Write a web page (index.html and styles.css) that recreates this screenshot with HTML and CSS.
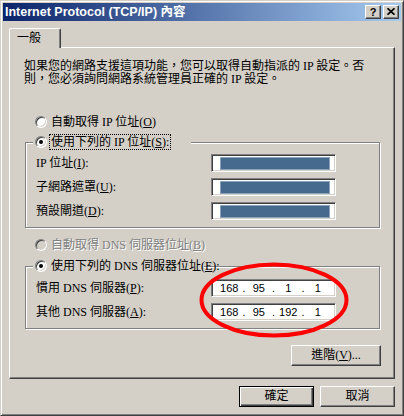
FILE: index.html
```html
<!DOCTYPE html>
<html>
<head>
<meta charset="utf-8">
<link rel="stylesheet" href="styles.css">
</head>
<body>
<div class="window">
  <div class="titlebar">
    <span class="title">Internet Protocol (TCP/IP) 內容</span>
    <div class="caption-btns">
      <span class="cbtn help">?</span>
      <span class="cbtn close"><svg width="8" height="7" viewBox="0 0 8 7"><path d="M0.5 0.3 L7.5 6.7 M7.5 0.3 L0.5 6.7" stroke="#000" stroke-width="1.7" fill="none"/></svg></span>
    </div>
  </div>
  <div class="body">
    <div class="tabs"><div class="tab">一般</div></div>
    <div class="panel">
      <p class="intro">如果您的網路支援這項功能，您可以取得自動指派的 IP 設定。否<br>則，您必須詢問網路系統管理員正確的 IP 設定。</p>

      <div class="radio-row first"><span class="radio"></span><span class="rlabel">自動取得 IP 位址(<u>O</u>)</span></div>

      <div class="group g-ip">
        <div class="legend"><span class="radio checked"></span><span class="rlabel focus">使用下列的 IP 位址(<u>S</u>):</span></div>
        <div class="rows">
          <div class="row"><span class="label">IP 位址(<u>I</u>):</span><span class="field"><span class="mask"></span></span></div>
          <div class="row"><span class="label">子網路遮罩(<u>U</u>):</span><span class="field"><span class="mask"></span></span></div>
          <div class="row"><span class="label">預設閘道(<u>D</u>):</span><span class="field"><span class="mask"></span></span></div>
        </div>
      </div>

      <div class="radio-row second disabled"><span class="radio"></span><span class="rlabel">自動取得 DNS 伺服器位址(<u>B</u>)</span></div>

      <div class="group g-dns">
        <div class="legend"><span class="radio checked"></span><span class="rlabel">使用下列的 DNS 伺服器位址(<u>E</u>):</span></div>
        <div class="rows">
          <div class="row"><span class="label">慣用 DNS 伺服器(<u>P</u>):</span><span class="field ip"><span class="seg">168</span><span class="dot">.</span><span class="seg">95</span><span class="dot">.</span><span class="seg">1</span><span class="dot">.</span><span class="seg">1</span></span></div>
          <div class="row"><span class="label">其他 DNS 伺服器(<u>A</u>):</span><span class="field ip"><span class="seg">168</span><span class="dot">.</span><span class="seg">95</span><span class="dot">.</span><span class="seg">192</span><span class="dot">.</span><span class="seg">1</span></span></div>
        </div>
      </div>

      <div class="adv-row"><button class="btn adv">進階(<u>V</u>)...</button></div>
    </div>
    <div class="dlg-btns">
      <button class="btn default">確定</button>
      <button class="btn">取消</button>
    </div>
  </div>
  <svg class="ellipse" width="150" height="76" viewBox="0 0 150 76"><ellipse cx="75" cy="38" rx="72.5" ry="35.5" fill="none" stroke="#ff0000" stroke-width="4"/></svg>
</div>
</body>
</html>
```

FILE: styles.css
```css
* { box-sizing: border-box; }
html, body { margin: 0; padding: 0; }
body {
  background: #d4d0c8;
  font-family: "Liberation Serif", "Noto Sans CJK TC", serif;
  font-size: 12px;
  color: #000;
}
.window {
  position: relative;
  width: 404px;
  height: 416px;
  background: #d4d0c8;
  border: 1px solid;
  border-color: #d4d0c8 #404040 #404040 #d4d0c8;
  box-shadow: inset 1px 1px 0 #fff, inset -1px -1px 0 #808080;
  padding: 2px;
  display: flex;
  flex-direction: column;
}
.titlebar {
  height: 18px;
  background: linear-gradient(to right, #0a246a 0%, #a6caf0 100%);
  display: flex;
  align-items: center;
  justify-content: space-between;
  padding: 0 2px 0 2px;
}
.title {
  color: #fff;
  font-family: "Liberation Sans", "Noto Sans CJK TC", sans-serif;
  font-weight: bold;
  font-size: 12.5px;
  line-height: 18px;
  white-space: nowrap;
}
.caption-btns { display: flex; gap: 2px; }
.cbtn {
  width: 16px;
  height: 14px;
  background: #d4d0c8;
  border: 1px solid;
  border-color: #fff #404040 #404040 #fff;
  box-shadow: inset -1px -1px 0 #808080;
  display: flex;
  align-items: center;
  justify-content: center;
}
.cbtn.help {
  font-family: "Liberation Sans", sans-serif;
  font-weight: bold;
  font-size: 11px;
  line-height: 12px;
  padding-bottom: 1px;
}
.cbtn.close svg { display: block; margin-top: -1px; }

.body {
  flex: 1;
  padding: 7px 6px 0 6px;
  display: flex;
  flex-direction: column;
}
.tabs { display: flex; height: 20px; }
.tab {
  position: relative;
  z-index: 1;
  width: 52px;
  height: 20px;
  background: #d4d0c8;
  border-top: 1px solid #fff;
  border-left: 1px solid #fff;
  border-right: 1px solid #404040;
  box-shadow: inset -1px 0 0 #808080;
  border-radius: 2px 2px 0 0;
  padding: 3px 0 0 7px;
  line-height: 12px;
}
.panel {
  margin-top: -1px;
  height: 332px;
  border: 1px solid;
  border-color: #fff #404040 #404040 #fff;
  box-shadow: inset -1px -1px 0 #808080;
  padding: 0 14px 0 15px;
  display: flex;
  flex-direction: column;
}
.intro {
  margin: 12px 0 0 -1px;
  line-height: 13px;
  white-space: nowrap;
}
.radio-row, .legend {
  height: 14px;
  display: flex;
  align-items: center;
  gap: 3px;
  line-height: 14px;
  white-space: nowrap;
}
.radio-row { padding-left: 10px; }
.radio-row.first { margin-top: 29px; }
.radio-row.second { margin-top: 10px; }
.rlabel { padding: 0 1px; }
.focus { outline: 1px dotted #000; outline-offset: 0; }
.disabled .rlabel { color: #808080; text-shadow: 1px 1px 0 #fff; }
.disabled .rlabel u { text-decoration-color: #808080; }

.radio {
  position: relative;
  flex: none;
  width: 12px;
  height: 12px;
  border-radius: 50%;
  border: 1px solid;
  border-color: #808080 #fff #fff #808080;
  box-shadow: inset 1px 1px 0 #404040, inset -1px -1px 0 #d4d0c8;
  background: #fff;
}
.disabled .radio { background: #d4d0c8; }
.radio.checked::after {
  content: "";
  position: absolute;
  left: 3px;
  top: 3px;
  width: 4px;
  height: 4px;
  border-radius: 50%;
  background: #000;
}

.group {
  border: 1px solid #808080;
  box-shadow: inset 1px 1px 0 #fff, 1px 1px 0 #fff;
  padding: 0 0 7px 0;
}
.g-ip { margin-top: 13px; }
.g-dns { margin-top: 14px; }
.legend {
  margin-top: -8px;
  margin-left: 7px;
  padding-left: 2px;
  background: #d4d0c8;
}
.g-ip .legend { width: 158px; }
.g-dns .legend { width: 171px; }
.rows { display: flex; flex-direction: column; gap: 6px; }
.g-ip .rows { margin-top: 5px; }
.g-dns .rows { margin-top: 6px; }
.row {
  height: 18px;
  display: flex;
  align-items: center;
  padding-left: 10px;
}
.label { width: 175px; line-height: 18px; white-space: nowrap; }
.field {
  width: 125px;
  height: 18px;
  background: #fff;
  border: 1px solid;
  border-color: #808080 #fff #fff #808080;
  box-shadow: inset 1px 1px 0 #404040, inset -1px -1px 0 #d4d0c8;
  display: flex;
  align-items: center;
}
.mask {
  margin-left: 8px;
  width: 110px;
  height: 13px;
  background: #456a8d;
  box-shadow: inset 0 0 0 1px #8ba4bc;
}
.field.ip {
  padding-left: 6px;
  font-family: "Liberation Sans", sans-serif;
  font-size: 11px;
  line-height: 16px;
}
.seg { width: 22.5px; text-align: center; }
.dot { width: 7px; text-align: center; }

.adv-row {
  margin-top: 16px;
  margin-right: -1px;
  display: flex;
  justify-content: flex-end;
}
.btn {
  width: 75px;
  height: 21px;
  padding: 0;
  margin: 0;
  background: #d4d0c8;
  border: 1px solid;
  border-color: #fff #404040 #404040 #fff;
  box-shadow: inset -1px -1px 0 #808080;
  font-family: "Liberation Serif", "Noto Sans CJK TC", serif;
  font-size: 12px;
  line-height: 17px;
  color: #000;
}
.btn.adv { width: 90px; }
.btn.default {
  border: 1px solid #000;
  box-shadow: inset 1px 1px 0 #fff, inset -1px -1px 0 #404040, inset -2px -2px 0 #808080;
}
.dlg-btns {
  margin-top: 7px;
  display: flex;
  justify-content: flex-end;
  gap: 6px;
}
.ellipse {
  position: absolute;
  left: 198px;
  top: 261px;
}
```
